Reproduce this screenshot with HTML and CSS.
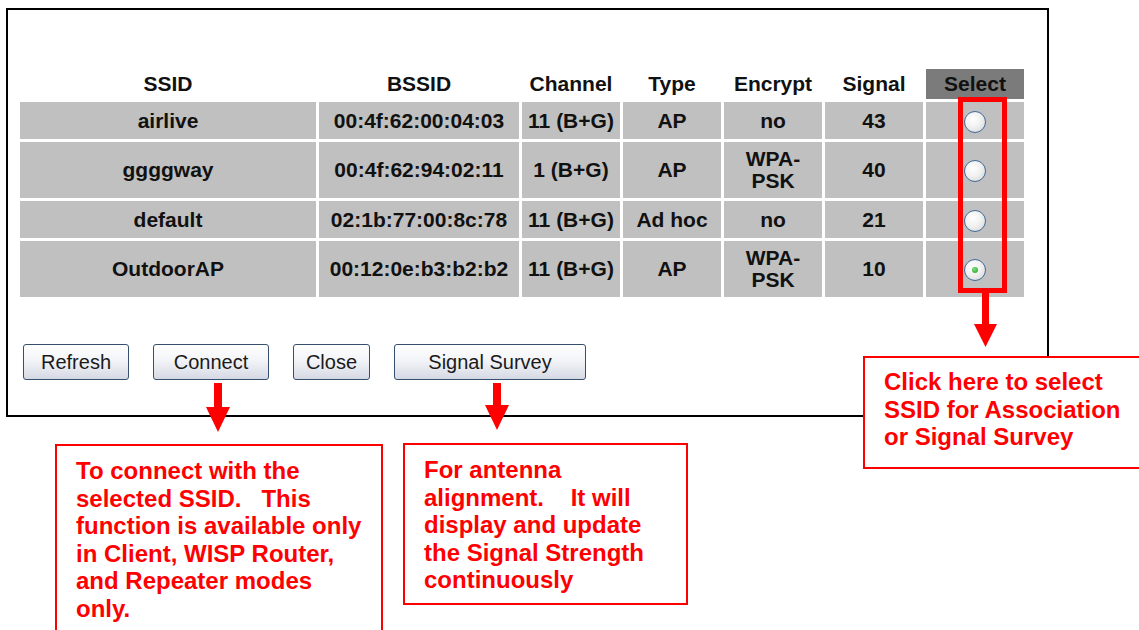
FILE: index.html
```html
<!DOCTYPE html>
<html lang="en">
<head>
    <meta charset="UTF-8">
    <title>Site Survey</title>
    <link rel="stylesheet" href="styles.css">
</head>
<body>
    <div class="panel">
        <table class="survey">
            <colgroup>
                <col style="width: 296px">
                <col style="width: 200px">
                <col style="width: 98px">
                <col style="width: 98px">
                <col style="width: 98px">
                <col style="width: 98px">
                <col style="width: 98px">
            </colgroup>
            <tr class="head">
                <th>SSID</th>
                <th>BSSID</th>
                <th>Channel</th>
                <th>Type</th>
                <th>Encrypt</th>
                <th>Signal</th>
                <th class="sel">Select</th>
            </tr>
            <tr class="short">
                <td>airlive</td>
                <td>00:4f:62:00:04:03</td>
                <td>11 (B+G)</td>
                <td>AP</td>
                <td>no</td>
                <td>43</td>
                <td><span class="radio"></span></td>
            </tr>
            <tr class="tall">
                <td>ggggway</td>
                <td>00:4f:62:94:02:11</td>
                <td>1 (B+G)</td>
                <td>AP</td>
                <td class="two">WPA-<br>PSK</td>
                <td>40</td>
                <td><span class="radio"></span></td>
            </tr>
            <tr class="short">
                <td>default</td>
                <td>02:1b:77:00:8c:78</td>
                <td>11 (B+G)</td>
                <td>Ad hoc</td>
                <td>no</td>
                <td>21</td>
                <td><span class="radio"></span></td>
            </tr>
            <tr class="tall">
                <td>OutdoorAP</td>
                <td>00:12:0e:b3:b2:b2</td>
                <td>11 (B+G)</td>
                <td>AP</td>
                <td class="two">WPA-<br>PSK</td>
                <td>10</td>
                <td><span class="radio checked"></span></td>
            </tr>
        </table>

        <div class="actions">
            <button class="btn w-refresh">Refresh</button>
            <button class="btn w-connect">Connect</button>
            <button class="btn w-close">Close</button>
            <button class="btn w-survey">Signal Survey</button>
        </div>
    </div>

    <!-- annotation layer -->
    <svg class="marks" width="1139" height="630" viewBox="0 0 1139 630">
        <rect x="960.5" y="99.5" width="44" height="191" fill="none" stroke="#ff0000" stroke-width="5"/>
        <polygon fill="#ff0000" points="982,293 989,293 989,324 997,324 985.5,347 974,324 982,324"/>
        <polygon fill="#ff0000" points="214,383 222,383 222,407 230,407 218,432 206,407 214,407"/>
        <polygon fill="#ff0000" points="493,383 501,383 501,405 509,405 497,430 485,405 493,405"/>
    </svg>

    <div class="note note-connect">
        To connect with the<br>
        selected SSID.&nbsp;&nbsp; This<br>
        function is available only<br>
        in Client, WISP Router,<br>
        and Repeater modes<br>
        only.
    </div>

    <div class="note note-survey">
        For antenna<br>
        alignment.&nbsp;&nbsp;&nbsp; It will<br>
        display and update<br>
        the Signal Strength<br>
        continuously
    </div>

    <div class="note note-select">
        Click here to select<br>
        SSID for Association<br>
        or Signal Survey
    </div>
</body>
</html>
```

FILE: styles.css
```css
* {
    box-sizing: border-box;
}

body {
    margin: 0;
    width: 1139px;
    height: 630px;
    position: relative;
    overflow: hidden;
    background: #ffffff;
    font-family: "Liberation Sans", Arial, sans-serif;
}

.panel {
    width: 1043px;
    height: 409px;
    margin: 8px 0 0 6px;
    border: 2px solid #000;
    padding: 56px 0 0 9px;
}

.survey {
    border-collapse: separate;
    border-spacing: 3px;
    table-layout: fixed;
    width: 1010px;
    font-size: 21px;
    font-weight: bold;
    color: #111;
}

.survey th,
.survey td {
    padding: 0;
    text-align: center;
    vertical-align: middle;
    line-height: 24px;
    white-space: nowrap;
}

.survey td.two {
    line-height: 22px;
}

.survey td {
    background: #c0c0c0;
}

.head th {
    height: 30px;
}

.head th.sel {
    background: #7b7b7b;
}

.short td {
    height: 37px;
}

.tall td {
    height: 56px;
}

.radio {
    display: inline-block;
    width: 22px;
    height: 22px;
    border-radius: 50%;
    border: 1px solid #3f6b98;
    background: radial-gradient(circle at 40% 35%, #ffffff 0%, #f1f1f1 45%, #d2d2d2 100%);
    vertical-align: middle;
    position: relative;
}

.radio.checked::after {
    content: "";
    position: absolute;
    left: 7px;
    top: 7px;
    width: 6px;
    height: 6px;
    border-radius: 50%;
    background: radial-gradient(circle at 40% 35%, #7be07b, #1e9e1e);
}

.actions {
    display: flex;
    gap: 24px;
    margin: 44px 0 0 6px;
}

.btn {
    height: 36px;
    border: 1px solid #34506e;
    border-radius: 3px;
    background: linear-gradient(#ffffff 0%, #f3f4f8 45%, #d6d9e4 100%);
    font-family: "Liberation Sans", Arial, sans-serif;
    font-size: 20px;
    color: #1a1a1a;
    padding: 0;
}

.w-refresh { width: 106px; }
.w-connect { width: 116px; }
.w-close { width: 77px; }
.w-survey { width: 192px; }

.marks {
    position: absolute;
    left: 0;
    top: 0;
    pointer-events: none;
}

.note {
    position: absolute;
    background: #fff;
    border: 2px solid #ff0000;
    color: #ff0000;
    font-family: "Liberation Sans", Arial, sans-serif;
    font-weight: bold;
    font-size: 24px;
    line-height: 27.5px;
    white-space: nowrap;
    padding-left: 19px;
}

.note-connect {
    left: 55px;
    top: 444px;
    width: 328px;
    height: 186px;
    border-bottom: none;
    padding-top: 11px;
}

.note-survey {
    left: 403px;
    top: 443px;
    width: 285px;
    height: 162px;
    padding-top: 11px;
}

.note-select {
    left: 863px;
    top: 356px;
    width: 276px;
    height: 113px;
    border-right: none;
    padding-top: 10px;
}
```
